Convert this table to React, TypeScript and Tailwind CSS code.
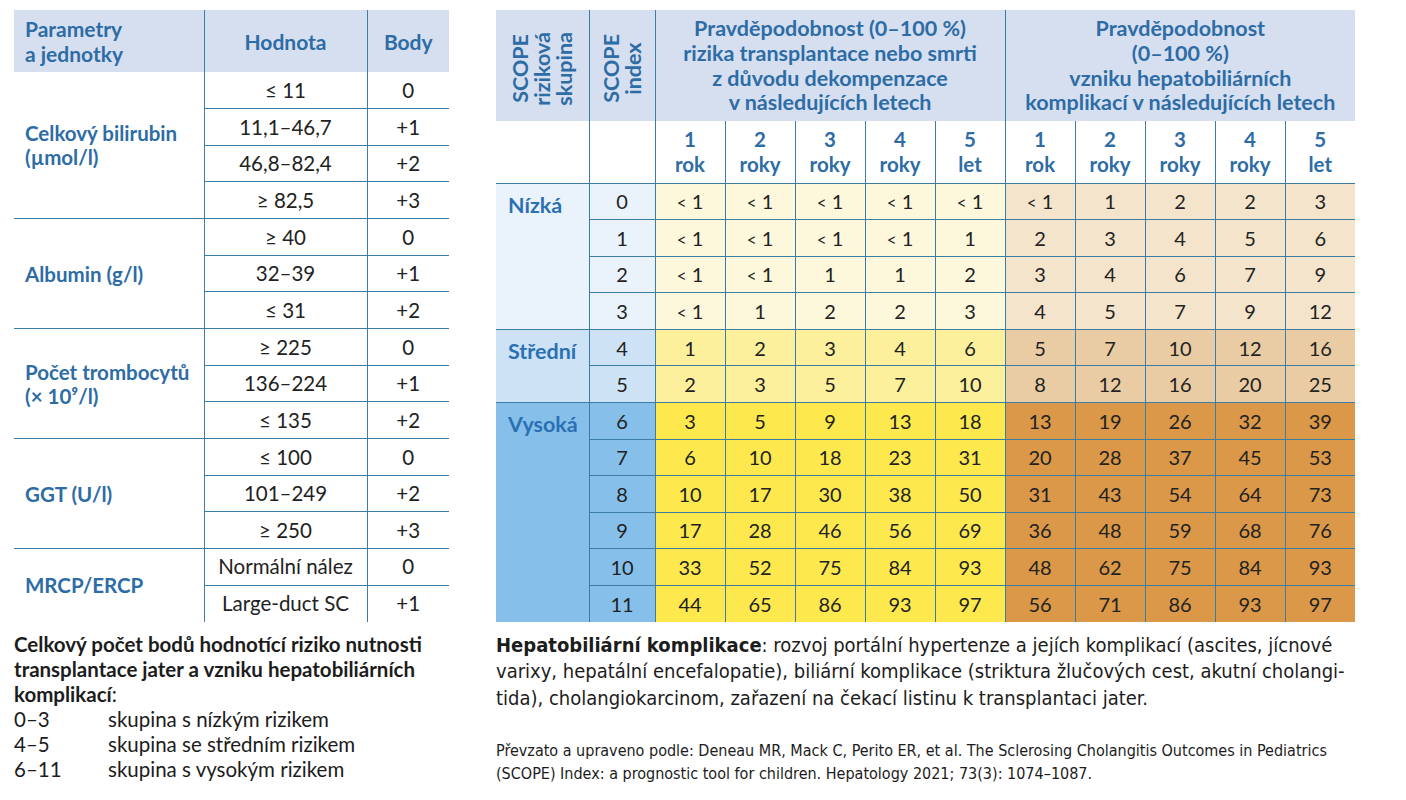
import React from 'react'

const LINE = 'border-[#3b7da5]'
const FONT = "font-['Lato','Open_Sans',sans-serif]"

const PARAMS = [
  { label: ['Celkový bilirubin', '(µmol/l)'], rows: [['≤ 11', '0'], ['11,1–46,7', '+1'], ['46,8–82,4', '+2'], ['≥ 82,5', '+3']] },
  { label: ['Albumin (g/l)'], rows: [['≥ 40', '0'], ['32–39', '+1'], ['≤ 31', '+2']] },
  { label: ['Počet trombocytů', '(× 10⁹/l)'], rows: [['≥ 225', '0'], ['136–224', '+1'], ['≤ 135', '+2']] },
  { label: ['GGT (U/l)'], rows: [['≤ 100', '0'], ['101–249', '+2'], ['≥ 250', '+3']] },
  { label: ['MRCP/ERCP'], rows: [['Normální nález', '0'], ['Large-duct SC', '+1']] },
]

const TONES = {
  low: { blue: 'bg-[#eaf3fc]', yellow: 'bg-[#fdf8dc]', beige: 'bg-[#f4e4cc]' },
  mid: { blue: 'bg-[#cde2f5]', yellow: 'bg-[#fcf09c]', beige: 'bg-[#e9cca3]' },
  high: { blue: 'bg-[#86c0ea]', yellow: 'bg-[#fde94e]', beige: 'bg-[#da9848]' },
}

const L = '<1'
const SCOPE: { idx: number; tone: keyof typeof TONES; a: string[]; b: string[] }[] = [
  { idx: 0, tone: 'low', a: [L, L, L, L, L], b: [L, '1', '2', '2', '3'] },
  { idx: 1, tone: 'low', a: [L, L, L, L, '1'], b: ['2', '3', '4', '5', '6'] },
  { idx: 2, tone: 'low', a: [L, L, '1', '1', '2'], b: ['3', '4', '6', '7', '9'] },
  { idx: 3, tone: 'low', a: [L, '1', '2', '2', '3'], b: ['4', '5', '7', '9', '12'] },
  { idx: 4, tone: 'mid', a: ['1', '2', '3', '4', '6'], b: ['5', '7', '10', '12', '16'] },
  { idx: 5, tone: 'mid', a: ['2', '3', '5', '7', '10'], b: ['8', '12', '16', '20', '25'] },
  { idx: 6, tone: 'high', a: ['3', '5', '9', '13', '18'], b: ['13', '19', '26', '32', '39'] },
  { idx: 7, tone: 'high', a: ['6', '10', '18', '23', '31'], b: ['20', '28', '37', '45', '53'] },
  { idx: 8, tone: 'high', a: ['10', '17', '30', '38', '50'], b: ['31', '43', '54', '64', '73'] },
  { idx: 9, tone: 'high', a: ['17', '28', '46', '56', '69'], b: ['36', '48', '59', '68', '76'] },
  { idx: 10, tone: 'high', a: ['33', '52', '75', '84', '93'], b: ['48', '62', '75', '84', '93'] },
  { idx: 11, tone: 'high', a: ['44', '65', '86', '93', '97'], b: ['56', '71', '86', '93', '97'] },
]

const GROUP_LABEL: Record<number, { text: string; span: number }> = {
  0: { text: 'Nízká', span: 4 },
  4: { text: 'Střední', span: 2 },
  6: { text: 'Vysoká', span: 6 },
}

const YEARS = [['1', 'rok'], ['2', 'roky'], ['3', 'roky'], ['4', 'roky'], ['5', 'let']]

// hodnota "< 1" s menším znakem menší než
function Val({ v }: { v: string }) {
  if (v === L) return <><span className="text-[17px]">&lt;</span> 1</>
  return <>{v}</>
}

function ParamTable() {
  return (
    <table className={`w-[435px] table-fixed border-collapse ${FONT}`}>
      <colgroup>
        <col className="w-[190px]" />
        <col className="w-[163px]" />
        <col className="w-[82px]" />
      </colgroup>
      <thead>
        <tr className="h-[62px] bg-[#d6dff0] text-[21px] font-bold leading-[25px] text-[#2d6ca5]">
          <th className="pl-[11px] text-left font-bold">Parametry<br />a jednotky</th>
          <th className={`border-l ${LINE} font-bold`}>Hodnota</th>
          <th className={`border-l ${LINE} font-bold`}>Body</th>
        </tr>
      </thead>
      <tbody className="text-[20.5px] text-[#222]">
        {PARAMS.map((p, gi) =>
          p.rows.map((r, ri) => (
            <tr key={gi + '-' + ri} className="h-[36.67px]">
              {ri === 0 && (
                <td rowSpan={p.rows.length} className={`${gi > 0 ? 'border-t' : ''} ${LINE} pl-[11px] align-middle text-[20.5px] font-bold leading-[24px] text-[#2d6ca5]`}>
                  {p.label.map((t, i) => <div key={i} className="whitespace-nowrap">{t}</div>)}
                </td>
              )}
              <td className={`${ri > 0 || gi > 0 ? 'border-t' : ''} border-l ${LINE} p-0 text-center whitespace-nowrap`}>{r[0]}</td>
              <td className={`${ri > 0 || gi > 0 ? 'border-t' : ''} border-l ${LINE} p-0 text-center`}>{r[1]}</td>
            </tr>
          ))
        )}
      </tbody>
    </table>
  )
}

function ScopeTable() {
  return (
    <table className={`w-[859px] table-fixed border-collapse ${FONT}`}>
      <colgroup>
        <col className="w-[93px]" />
        <col className="w-[66px]" />
        {Array.from({ length: 10 }).map((_, i) => <col key={i} className="w-[70px]" />)}
      </colgroup>
      <thead className="font-bold text-[#2d6ca5]">
        <tr className="h-[111px] bg-[#d6dff0] text-[21.5px] leading-[24.7px]">
          <th className="p-0 font-bold">
            <div className="flex h-[111px] items-center justify-center pt-[6px]">
              <div className="rotate-180 text-center leading-[22px] [writing-mode:vertical-rl]">SCOPE<br />riziková<br />skupina</div>
            </div>
          </th>
          <th className={`border-l ${LINE} p-0 font-bold`}>
            <div className="flex h-[111px] items-center justify-center pt-[6px]">
              <div className="rotate-180 text-center leading-[22px] [writing-mode:vertical-rl]">SCOPE<br />index</div>
            </div>
          </th>
          <th colSpan={5} className={`border-l ${LINE} p-0 font-bold whitespace-nowrap`}>
            Pravděpodobnost (0–100 %)<br />rizika transplantace nebo smrti<br />z důvodu dekompenzace<br />v následujících letech
          </th>
          <th colSpan={5} className={`border-l ${LINE} p-0 font-bold whitespace-nowrap`}>
            Pravděpodobnost<br />(0–100 %)<br />vzniku hepatobiliárních<br />komplikací v následujících letech
          </th>
        </tr>
        <tr className="h-[62px] bg-white text-[20.5px] leading-[25px]">
          <th className={`border-b ${LINE}`} />
          <th className={`border-b border-l ${LINE}`} />
          {[...YEARS, ...YEARS].map((y, i) => (
            <th key={i} className={`border-b border-l ${LINE} p-0 font-bold`}>{y[0]}<br />{y[1]}</th>
          ))}
        </tr>
      </thead>
      <tbody className="text-[20px] text-[#222]">
        {SCOPE.map(row => {
          const t = TONES[row.tone]
          const g = GROUP_LABEL[row.idx]
          return (
            <tr key={row.idx} className="h-[36.58px]">
              {g && (
                <td rowSpan={g.span} className={`border-t ${LINE} ${t.blue} pl-[12px] pt-[5px] align-top text-[21.5px] font-bold text-[#2a70b2]`}>{g.text}</td>
              )}
              <td className={`border-t border-l ${LINE} ${t.blue} p-0 text-center`}>{row.idx}</td>
              {row.a.map((v, i) => (
                <td key={'a' + i} className={`border-t border-l ${LINE} ${t.yellow} p-0 text-center`}><Val v={v} /></td>
              ))}
              {row.b.map((v, i) => (
                <td key={'b' + i} className={`border-t border-l ${LINE} ${t.beige} p-0 text-center`}><Val v={v} /></td>
              ))}
            </tr>
          )
        })}
      </tbody>
    </table>
  )
}

export default function App() {
  return (
    <div className="min-h-[800px] w-[1406px] bg-white">
      <div className="flex gap-[47px] pl-[14px] pt-[10px]">
        {/* levý sloupec */}
        <div className="w-[435px]">
          <ParamTable />
          <div className={`mt-[10px] text-[20.5px] leading-[25px] text-[#1c1c1c] ${FONT}`}>
            <p className="font-bold">
              Celkový počet bodů hodnotící riziko nutnosti<br />transplantace jater a vzniku hepatobiliárních<br />komplikací<span className="font-normal">:</span>
            </p>
            {[['0–3', 'skupina s nízkým rizikem'], ['4–5', 'skupina se středním rizikem'], ['6–11', 'skupina s vysokým rizikem']].map(r => (
              <div key={r[0]} className="flex">
                <span className="w-[94px] shrink-0">{r[0]}</span>
                <span>{r[1]}</span>
              </div>
            ))}
          </div>
        </div>

        {/* pravý sloupec */}
        <div className="w-[859px]">
          <ScopeTable />
          <div className="mt-[10px] font-['Liberation_Sans_Narrow','DejaVu_Sans_Condensed','Liberation_Sans',sans-serif] text-[#1c1c1c]">
            <p className="whitespace-nowrap text-[20px] leading-[26.5px]">
              <b>Hepatobiliární komplikace</b>: rozvoj portální hypertenze a jejích komplikací (ascites, jícnové<br />
              varixy, hepatální encefalopatie), biliární komplikace (striktura žlučových cest, akutní cholangi-<br />
              tida), cholangiokarcinom, zařazení na čekací listinu k transplantaci jater.
            </p>
            <p className="mt-[28px] whitespace-nowrap text-[16px] leading-[23px]">
              Převzato a upraveno podle: Deneau MR, Mack C, Perito ER, et al. The Sclerosing Cholangitis Outcomes in Pediatrics<br />
              (SCOPE) Index: a prognostic tool for children. Hepatology 2021; 73(3): 1074–1087.
            </p>
          </div>
        </div>
      </div>
    </div>
  )
}
